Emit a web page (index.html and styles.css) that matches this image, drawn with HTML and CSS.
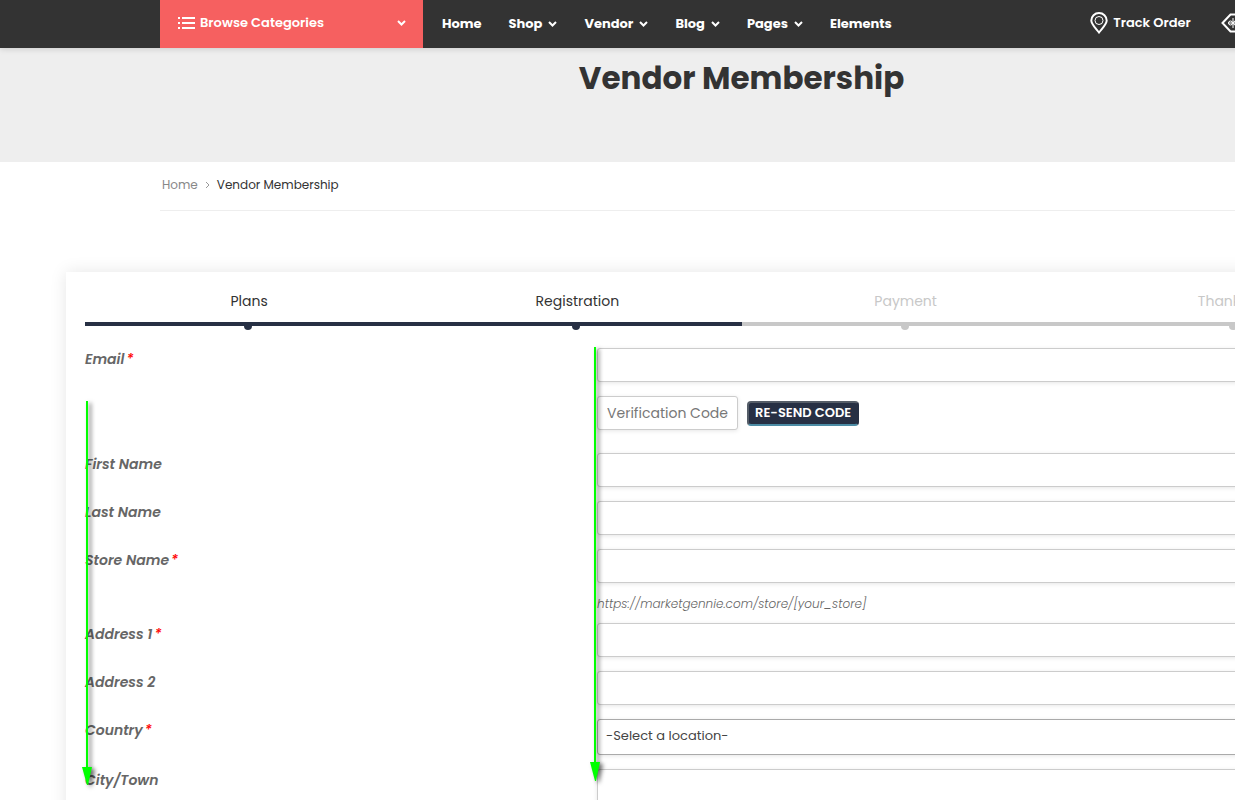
FILE: index.html
```html
<!DOCTYPE html>
<html lang="en">
<head>
  <meta charset="UTF-8" />
  <meta name="viewport" content="width=device-width, initial-scale=1.0" />
  <title>Vendor Membership</title>
  <link rel="stylesheet" href="styles.css">
</head>
<body>
  <div class="page">
    <header class="header">
      <div class="container header-inner">
        <button type="button" class="browse-btn">
          <svg width="17" height="12" viewBox="0 0 17 12" fill="#fff"><path d="M0 0h2v2H0zM4 0h13v2H4zM0 5h2v2H0zM4 5h13v2H4zM0 10h2v2H0zM4 10h13v2H4z"/></svg>
          <span>Browse Categories</span>
          <svg class="browse-arrow" width="9" height="6" viewBox="0 0 9 6"><path d="M1 1l3.5 3.5L8 1"/></svg>
        </button>
        <nav class="nav">
          <a href="#">Home</a>
          <a href="#">Shop <svg width="9" height="6" viewBox="0 0 9 6"><path d="M1 1l3.5 3.5L8 1"/></svg></a>
          <a href="#">Vendor <svg width="9" height="6" viewBox="0 0 9 6"><path d="M1 1l3.5 3.5L8 1"/></svg></a>
          <a href="#">Blog <svg width="9" height="6" viewBox="0 0 9 6"><path d="M1 1l3.5 3.5L8 1"/></svg></a>
          <a href="#">Pages <svg width="9" height="6" viewBox="0 0 9 6"><path d="M1 1l3.5 3.5L8 1"/></svg></a>
          <a href="#">Elements</a>
        </nav>
        <div class="header-links">
          <a href="#">
            <svg width="18" height="22" viewBox="0 0 18 22"><path d="M9 20.5C6 16.5 1.3 12.4 1.3 8.5a7.7 7.5 0 0 1 15.4 0C16.7 12.4 12 16.5 9 20.5z"/><circle cx="9" cy="8.5" r="4"/></svg>
            Track Order
          </a>
          <a href="#">
            <svg width="24" height="20" viewBox="0 0 24 20"><path d="M1.5 10L9.5 1.5H22v17H9.500z"/><path class="thin" d="M7 10h10M12 5v10"/><circle cx="9.500" cy="10" r="2"/><circle cx="14.500" cy="10" r="2"/></svg>
            Daily Deals
          </a>
        </div>
      </div>
    </header>

    <div class="page-header">
      <h1>Vendor Membership</h1>
    </div>

    <div class="container">
      <nav class="breadcrumb">
        <a href="#">Home</a>
        <svg width="5" height="8" viewBox="0 0 5 8"><path d="M1 1l3 3-3 3"/></svg>
        <span>Vendor Membership</span>
      </nav>
    </div>

    <main class="card">
      <ol class="steps">
        <li class="done">Plans</li>
        <li class="done">Registration</li>
        <li>Payment</li>
        <li>Thank You</li>
      </ol>

      <form class="form">
        <div class="row">
          <label for="email">Email<span class="required">*</span></label>
          <input type="email" id="email" />
        </div>
        <div class="row verify-row">
          <div class="verify">
            <input type="text" placeholder="Verification Code" aria-label="Verification Code" />
            <button type="button" class="resend-btn">RE-SEND CODE</button>
          </div>
        </div>
        <div class="row">
          <label for="firstName">First Name</label>
          <input type="text" id="firstName" />
        </div>
        <div class="row">
          <label for="lastName">Last Name</label>
          <input type="text" id="lastName" />
        </div>
        <div class="row">
          <label for="storeName">Store Name<span class="required">*</span></label>
          <input type="text" id="storeName" />
          <p class="hint">https://marketgennie.com/store/[your_store]</p>
        </div>
        <div class="row">
          <label for="address1">Address 1<span class="required">*</span></label>
          <input type="text" id="address1" />
        </div>
        <div class="row">
          <label for="address2">Address 2</label>
          <input type="text" id="address2" />
        </div>
        <div class="row">
          <label for="country">Country<span class="required">*</span></label>
          <select id="country">
            <option>-Select a location-</option>
          </select>
        </div>
        <div class="row">
          <label for="city">City/Town</label>
          <input type="text" id="city" />
        </div>

        <svg class="arrow arrow-labels" width="12" height="384" viewBox="0 0 12 384"><path d="M5 0h2v366h4L7 384H6L1 366h4z"/></svg>
        <svg class="arrow arrow-fields" width="12" height="434" viewBox="0 0 12 434"><path d="M5 0h2v415h4L7 434H6L1 415h4z"/></svg>
      </form>
    </main>
  </div>
</body>
</html>
```

FILE: styles.css
```css
* {
  box-sizing: border-box;
}
body {
  margin: 0;
  font-family: Poppins, Inter, sans-serif;
  font-size: 14px;
  color: #666;
  background-color: #fff;
  overflow: hidden;
}
a {
  color: inherit;
  text-decoration: none;
}
svg {
  flex: none;
}
.page {
  min-width: 1483px;
}
.container {
  padding: 0 160px;
}

/* header */
.header {
  position: relative;
  background-color: #333;
  color: #fff;
  box-shadow: 0 1px 6px rgba(0, 0, 0, 0.15);
}
.header-inner {
  display: flex;
  align-items: center;
  height: 48px;
}
.browse-btn {
  display: flex;
  align-items: center;
  gap: 5px;
  width: 263px;
  height: 48px;
  padding: 0 17px 3px 18px;
  border: none;
  background-color: #f66060;
  color: #fff;
  font: 600 13px Poppins, Inter, sans-serif;
  cursor: pointer;
}
.browse-arrow {
  margin-left: auto;
}
.browse-arrow path, .nav path {
  fill: none;
  stroke: #fff;
  stroke-width: 2;
}
.nav {
  display: flex;
  gap: 27px;
  margin-left: 19px;
  font-size: 13px;
  font-weight: 700;
}
.nav a {
  display: flex;
  align-items: center;
  gap: 6px;
}
.header-links {
  display: flex;
  gap: 30px;
  margin-left: auto;
  padding-bottom: 2px;
  font-size: 13px;
  font-weight: 600;
}
.header-links a {
  display: flex;
  align-items: center;
  gap: 5px;
}
.header-links path, .header-links circle {
  fill: none;
  stroke: #fff;
  stroke-width: 2;
}
.header-links circle, .header-links .thin {
  stroke-width: 1;
}

.page-header {
  height: 114px;
  padding-top: 6px;
  background-color: #eee;
  text-align: center;
}
.page-header h1 {
  margin: 0;
  font-size: 31px;
  line-height: 48px;
  font-weight: 700;
  color: #333;
}

.breadcrumb {
  display: flex;
  align-items: center;
  gap: 7px;
  height: 49px;
  padding: 0 2px 2px;
  border-bottom: 1px solid #eee;
  font-size: 12px;
  color: #333;
}
.breadcrumb a {
  color: #888;
}
.breadcrumb path {
  fill: none;
  stroke: #999;
}

/* membership card */
.card {
  margin: 61px 66px 0;
  padding: 16px 19px 60px;
  box-shadow: 0 0 16px rgba(0, 0, 0, 0.1);
}
.steps {
  display: grid;
  grid-template-columns: repeat(4, 1fr);
  margin: 0;
  padding: 0;
  list-style: none;
  text-align: center;
  font-size: 14px;
  line-height: 26px;
}
.steps li {
  position: relative;
  padding-bottom: 8px;
  border-bottom: 4px solid #c8c8c8;
  color: #c8c8c8;
}
.steps li::after {
  content: "";
  position: absolute;
  left: 50%;
  bottom: -8px;
  width: 8px;
  height: 8px;
  margin-left: -5px;
  border-radius: 50%;
  background-color: #c8c8c8;
}
.steps .done {
  border-color: #273044;
  color: #333;
}
.steps .done::after {
  background-color: #273044;
}

.form {
  position: relative;
  display: flex;
  flex-direction: column;
  gap: 14px;
  padding-top: 22px;
}
.row {
  display: grid;
  grid-template-columns: 39% 1fr;
}
.row label {
  line-height: 22px;
  font-weight: 600;
  font-style: italic;
}
.required {
  margin-left: 2px;
  font-weight: 500;
  color: #f00;
}
.row input, .row select {
  width: 100%;
  height: 34px;
  padding: 0 9px;
  border: 1px solid #ccc;
  border-radius: 3px;
  background-color: #fff;
  box-shadow: 0 1px 4px rgba(0, 0, 0, 0.1);
  font: 14px Poppins, Inter, sans-serif;
  color: #444;
}
.row select {
  height: 36px;
  padding: 0 8px 3px;
  border-color: #aaa;
  font-size: 13px;
  appearance: none;
}
.verify-row {
  margin-bottom: 9px;
}
.verify {
  grid-column: 2;
  display: flex;
  align-items: center;
  gap: 9px;
}
.verify input {
  width: 141px;
}
.verify input::placeholder {
  color: #777;
}
.resend-btn {
  height: 25px;
  padding: 0 6px;
  border: 2px solid #555d68;
  border-right-color: #273044;
  border-bottom-color: #4c8ca5;
  border-radius: 4px;
  background-color: #273044;
  color: #fff;
  font: 600 13px Poppins, Inter, sans-serif;
  cursor: pointer;
}
.hint {
  grid-column: 2;
  margin: 16px 0 0;
  font-size: 12px;
  line-height: 10px;
  font-weight: 300;
  font-style: italic;
}

.arrow {
  position: absolute;
  fill: #0f0;
  filter: drop-shadow(3px 2px 2px rgba(0, 0, 0, 0.6));
}
.arrow-labels {
  top: 75px;
  left: -4px;
}
.arrow-fields {
  top: 21px;
  left: 504px;
}
```
